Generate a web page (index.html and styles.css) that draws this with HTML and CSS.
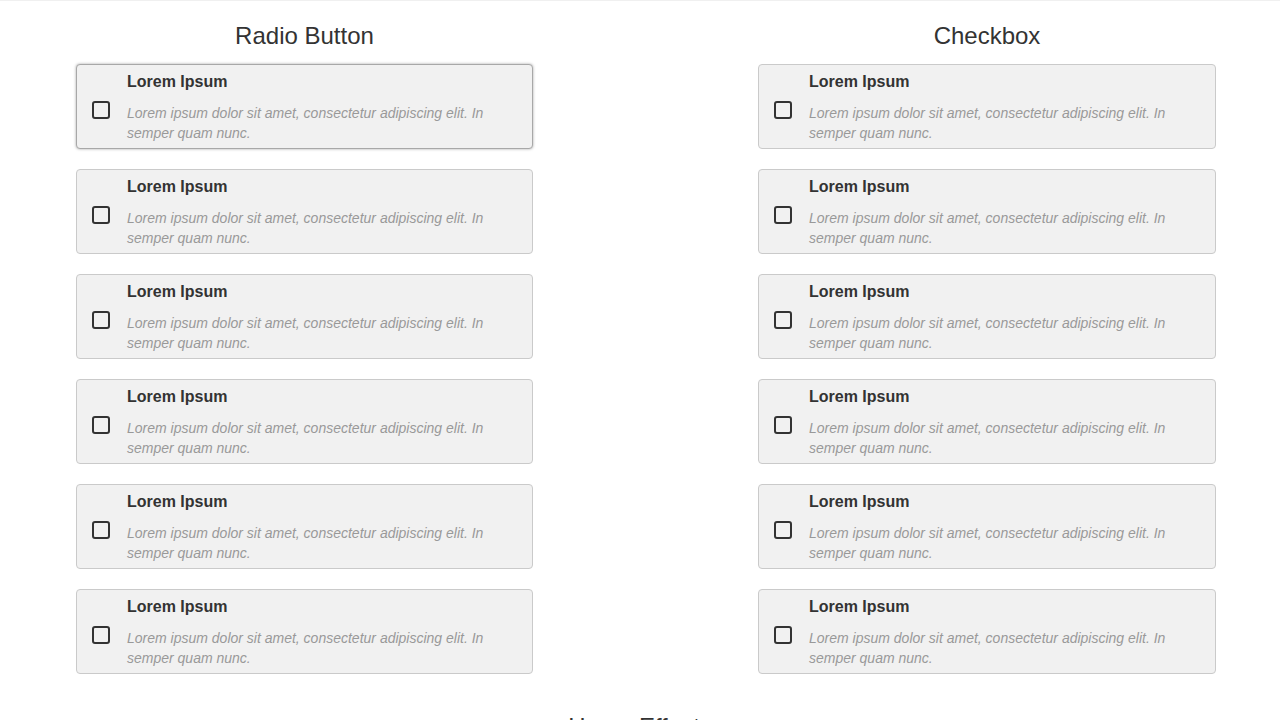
FILE: index.html
```html
<!DOCTYPE html>
<html lang="en">

<head>
    <meta charset="UTF-8">
    <meta name="viewport" content="width=device-width, initial-scale=1.0">
    <title>Radio Button / Checkbox</title>
    <link rel="stylesheet" href="styles.css">
</head>

<body>

    <div class="page">
        <div class="columns">
            <section class="column">
                <h2>Radio Button</h2>
                <div class="list">
                    <label class="option is-hover">
                        <span class="box"></span>
                        <span class="text">
                            <span class="title">Lorem Ipsum</span>
                            <span class="desc">Lorem ipsum dolor sit amet, consectetur adipiscing elit. In semper quam nunc.</span>
                        </span>
                    </label>
                    <label class="option">
                        <span class="box"></span>
                        <span class="text">
                            <span class="title">Lorem Ipsum</span>
                            <span class="desc">Lorem ipsum dolor sit amet, consectetur adipiscing elit. In semper quam nunc.</span>
                        </span>
                    </label>
                    <label class="option">
                        <span class="box"></span>
                        <span class="text">
                            <span class="title">Lorem Ipsum</span>
                            <span class="desc">Lorem ipsum dolor sit amet, consectetur adipiscing elit. In semper quam nunc.</span>
                        </span>
                    </label>
                    <label class="option">
                        <span class="box"></span>
                        <span class="text">
                            <span class="title">Lorem Ipsum</span>
                            <span class="desc">Lorem ipsum dolor sit amet, consectetur adipiscing elit. In semper quam nunc.</span>
                        </span>
                    </label>
                    <label class="option">
                        <span class="box"></span>
                        <span class="text">
                            <span class="title">Lorem Ipsum</span>
                            <span class="desc">Lorem ipsum dolor sit amet, consectetur adipiscing elit. In semper quam nunc.</span>
                        </span>
                    </label>
                    <label class="option">
                        <span class="box"></span>
                        <span class="text">
                            <span class="title">Lorem Ipsum</span>
                            <span class="desc">Lorem ipsum dolor sit amet, consectetur adipiscing elit. In semper quam nunc.</span>
                        </span>
                    </label>
                </div>
            </section>

            <section class="column">
                <h2>Checkbox</h2>
                <div class="list">
                    <label class="option">
                        <span class="box"></span>
                        <span class="text">
                            <span class="title">Lorem Ipsum</span>
                            <span class="desc">Lorem ipsum dolor sit amet, consectetur adipiscing elit. In semper quam nunc.</span>
                        </span>
                    </label>
                    <label class="option">
                        <span class="box"></span>
                        <span class="text">
                            <span class="title">Lorem Ipsum</span>
                            <span class="desc">Lorem ipsum dolor sit amet, consectetur adipiscing elit. In semper quam nunc.</span>
                        </span>
                    </label>
                    <label class="option">
                        <span class="box"></span>
                        <span class="text">
                            <span class="title">Lorem Ipsum</span>
                            <span class="desc">Lorem ipsum dolor sit amet, consectetur adipiscing elit. In semper quam nunc.</span>
                        </span>
                    </label>
                    <label class="option">
                        <span class="box"></span>
                        <span class="text">
                            <span class="title">Lorem Ipsum</span>
                            <span class="desc">Lorem ipsum dolor sit amet, consectetur adipiscing elit. In semper quam nunc.</span>
                        </span>
                    </label>
                    <label class="option">
                        <span class="box"></span>
                        <span class="text">
                            <span class="title">Lorem Ipsum</span>
                            <span class="desc">Lorem ipsum dolor sit amet, consectetur adipiscing elit. In semper quam nunc.</span>
                        </span>
                    </label>
                    <label class="option">
                        <span class="box"></span>
                        <span class="text">
                            <span class="title">Lorem Ipsum</span>
                            <span class="desc">Lorem ipsum dolor sit amet, consectetur adipiscing elit. In semper quam nunc.</span>
                        </span>
                    </label>
                </div>
            </section>
        </div>

        <section class="next">
            <h2>Hover Effects</h2>
        </section>
    </div>

</body>

</html>
```

FILE: styles.css
```css
/* Общие стили */
body {
    margin: 0;
    font-family: "Liberation Sans", Arial, sans-serif;
    color: #333;
    background-color: #fff;
}

.page {
    border-top: 1px solid #f0f0f0;
}

h2 {
    margin: 20px 0 14px;
    font-size: 24px;
    font-weight: normal;
    line-height: 29px;
    text-align: center;
    color: #333;
}

/* Две колонки */
.columns {
    display: grid;
    grid-template-columns: 457px 458px;
    column-gap: 225px;
    padding-left: 76px;
}

.list {
    display: flex;
    flex-direction: column;
    gap: 20px;
}

/* Карточка */
.option {
    display: flex;
    align-items: center;
    padding: 7px 15px 5px;
    background-color: #f1f1f1;
    border: 1px solid #cacaca;
    border-radius: 4px;
    cursor: pointer;
}

.option.is-hover {
    border-color: #a8a8a8;
    box-shadow: 0 0 3px rgba(0, 0, 0, 0.35);
}

.box {
    flex: none;
    width: 14px;
    height: 14px;
    margin: 5px 17px 0 0;
    border: 2px solid #333;
    border-radius: 3px;
}

.text {
    display: flex;
    flex-direction: column;
}

.title {
    font-size: 16px;
    font-weight: bold;
    line-height: 20px;
    margin-bottom: 11px;
    color: #333;
}

.desc {
    font-size: 14px;
    font-style: italic;
    line-height: 20px;
    color: #999;
}

.next h2 {
    margin-top: 38px;
}
```
